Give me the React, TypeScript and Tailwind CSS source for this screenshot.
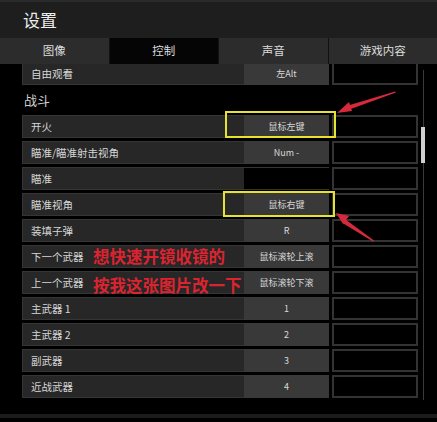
const font = { fontFamily: '"Noto Sans CJK SC", "Liberation Sans", sans-serif' }

const tabs = ['图像', '控制', '声音', '游戏内容']

const rows: { label: string; key: string; empty?: boolean }[] = [
  { label: '开火', key: '鼠标左键' },
  { label: '瞄准/瞄准射击视角', key: 'Num -' },
  { label: '瞄准', key: '', empty: true },
  { label: '瞄准视角', key: '鼠标右键' },
  { label: '装填子弹', key: 'R' },
  { label: '下一个武器', key: '鼠标滚轮上滚' },
  { label: '上一个武器', key: '鼠标滚轮下滚' },
  { label: '主武器 1', key: '1' },
  { label: '主武器 2', key: '2' },
  { label: '副武器', key: '3' },
  { label: '近战武器', key: '4' },
]

function BindRow({ label, keyName, empty }: { label: string; keyName: string; empty?: boolean }) {
  return (
    <div className="flex h-[23px]">
      <div className="flex flex-1 items-center border border-r-0 border-[#353535] bg-[#272727] pl-[8px] text-[10.5px] text-[#d6d6d6]">
        {label}
      </div>
      <div
        className={`flex w-[85px] items-center justify-center border-y text-[9px] text-[#d8d8d8] ${
          empty ? 'border-[#353535] bg-black' : 'border-[#3a3a3a] bg-[#393939]'
        }`}
      >
        {keyName}
      </div>
      <div className="ml-[3px] w-[86px] border-2 border-[#333] bg-black" />
    </div>
  )
}

export default function App() {
  return (
    <div className="relative h-[422px] w-[437px] overflow-hidden bg-black" style={font}>
      {/* Header */}
      <div className="flex h-[38px] items-center border-t-2 border-[#2a2a2a] bg-[#1e1e1e] pl-[23px] text-[17px] text-[#ececec]">
        设置
      </div>

      {/* Tabs */}
      <div className="flex h-[26px] gap-[1px] bg-[#111]">
        {tabs.map((t, i) => (
          <div
            key={t}
            className={`flex flex-1 items-center justify-center text-[11.5px] text-[#dcdcdc] ${
              i === 1 ? 'bg-[#050505]' : 'bg-[#2c2c2c]'
            }`}
          >
            {t}
          </div>
        ))}
      </div>

      {/* Content */}
      <div className="flex h-[354px] border-b-4 border-[#1c1c1c]">
        <div className="flex w-[418px] flex-col overflow-hidden pl-[22px]">
          <div className="-mt-[2px]">
            <BindRow label="自由观看" keyName="左Alt" />
          </div>
          <div className="flex h-[30px] items-center pl-[2px] text-[13px] text-[#cfcfcf]">战斗</div>
          <div className="flex flex-col gap-[3px]">
            {rows.map((r) => (
              <BindRow key={r.label} label={r.label} keyName={r.key} empty={r.empty} />
            ))}
          </div>
        </div>
        {/* Scrollbar */}
        <div className="relative ml-[3px] mt-[6px] h-[330px] w-[4px]">
          <div className="absolute left-[2px] top-0 h-full w-px bg-[#3a3a3a]" />
          <div className="absolute left-0 top-[57px] h-[36px] w-[4px] bg-[#cfcfcf]" />
        </div>
      </div>

      {/* Annotations */}
      <div className="absolute left-[225px] top-[111px] h-[27px] w-[111px] border-2 border-[#e6e232]" />
      <div className="absolute left-[223px] top-[191px] h-[26px] w-[112px] border-2 border-[#e6e232]" />

      <div className="absolute left-[93px] top-[246px] text-[16.5px] font-bold leading-[20px] text-[#dc2430]">
        想快速开镜收镜的
      </div>
      <div className="absolute left-[93px] top-[275px] text-[16.5px] font-bold leading-[20px] text-[#dc2430]">
        按我这张图片改一下
      </div>

      <svg className="absolute left-0 top-0" width="437" height="422" viewBox="0 0 437 422">
        <path d="M395 91.5 L396 92.5 L348 110 L346.5 106 Z" fill="#d62a3c" />
        <path d="M337 113 L349 102 L352 111 Z" fill="#d62a3c" />
        <path d="M374 240.5 L373 241.5 L342.5 223 L345.5 219.5 Z" fill="#d62a3c" />
        <path d="M336 213 L349 216 L343 224 Z" fill="#d62a3c" />
      </svg>
    </div>
  )
}
